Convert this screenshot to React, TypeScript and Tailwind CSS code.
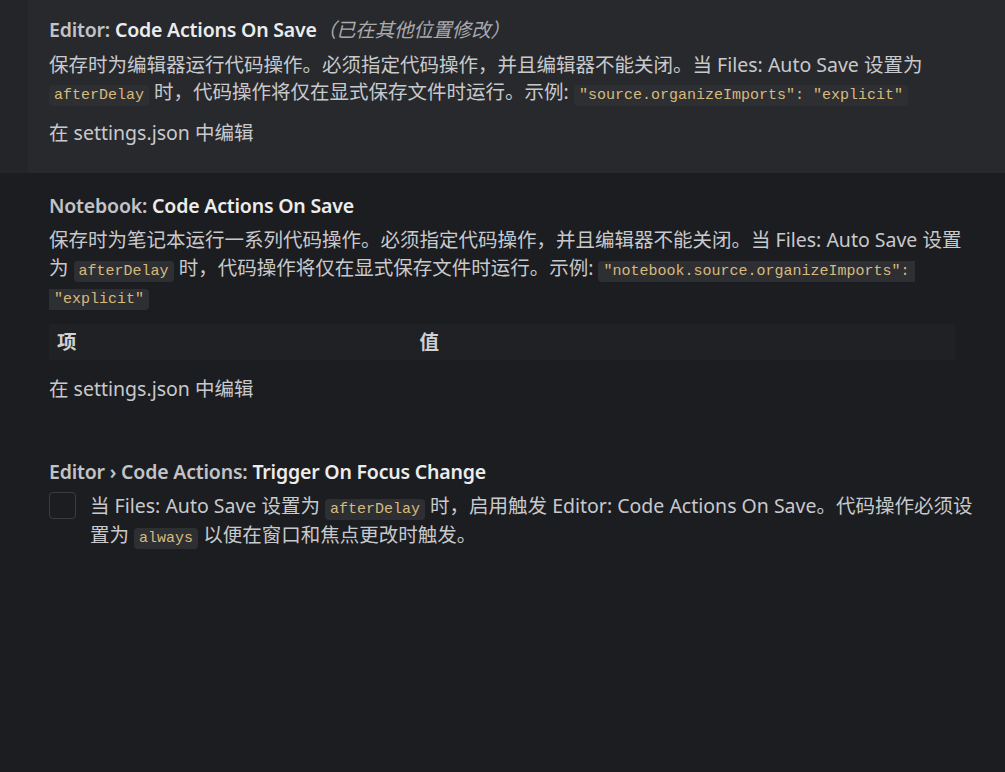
const Code = ({ children, className = '' }: { children: React.ReactNode; className?: string }) => (
  <code
    className={`rounded-[4px] bg-[#2e2f33] px-[5px] py-[2px] font-['Liberation_Mono',monospace] text-[15px] leading-none text-[#d7ba7d] ${className}`}
  >
    {children}
  </code>
)

function Title({ category, label, extra }: { category: string; label: string; extra?: string }) {
  return (
    <div className="leading-[27px] font-semibold tracking-[-0.01em]">
      <span className="text-[#c2c3c7]">{category}</span>
      <span className="text-[#ececed]">{label}</span>
      {extra && <span className="font-normal italic text-[#a9aaae]">{extra}</span>}
    </div>
  )
}

export default function App() {
  return (
    <div className="h-[772px] w-[1005px] overflow-hidden bg-[#1c1d20] font-['Noto_Sans','Noto_Sans_CJK_SC',sans-serif] text-[19.5px] text-[#c8c9cc]">
      {/* focused row */}
      <div className="flex h-[173px] bg-[#242528]">
        <div className="ml-[28px] flex-1 bg-[#28292c] pl-[21px] pt-[16px]">
          <Title category="Editor: " label="Code Actions On Save" extra="（已在其他位置修改）" />
          <p className="mt-[8px] whitespace-nowrap leading-[27px]">
            保存时为编辑器运行代码操作。必须指定代码操作，并且编辑器不能关闭。当 Files: Auto Save 设置为
            <br />
            <Code>afterDelay</Code> 时，代码操作将仅在显式保存文件时运行。示例: <Code>"source.organizeImports": "explicit"</Code>
          </p>
          <div className="mt-[14px] leading-[27px]">在 settings.json 中编辑</div>
        </div>
      </div>

      <div className="pl-[49px] pt-[19px]">
        <Title category="Notebook: " label="Code Actions On Save" />
        <p className="mt-[7px] whitespace-nowrap leading-[28px]">
          保存时为笔记本运行一系列代码操作。必须指定代码操作，并且编辑器不能关闭。当 Files: Auto Save 设置
          <br />
          为 <Code>afterDelay</Code> 时，代码操作将仅在显式保存文件时运行。示例: <Code className="rounded-r-none">"notebook.source.organizeImports":</Code>
          <br />
          <Code className="rounded-l-none">"explicit"</Code>
        </p>

        <div className="mt-[14px] flex h-[36px] w-[906px] items-center bg-[#202124] font-bold text-[#d0d1d4]">
          <div className="w-[40%] pl-[8px]">项</div>
          <div className="w-[60%] pl-[8px]">值</div>
        </div>

        <div className="mt-[15px] leading-[27px]">在 settings.json 中编辑</div>

        <div className="mt-[56px]">
          <Title category="Editor › Code Actions: " label="Trigger On Focus Change" />
          <div className="mt-[6px] flex gap-[14px]">
            <div className="mt-[1px] h-[27px] w-[27px] shrink-0 rounded-[4px] border border-[#3b3c40] bg-[#1c1d20]" />
            <p className="whitespace-nowrap leading-[29px]">
              当 Files: Auto Save 设置为 <Code>afterDelay</Code> 时，启用触发 Editor: Code Actions On Save。代码操作必须设
              <br />
              置为 <Code>always</Code> 以便在窗口和焦点更改时触发。
            </p>
          </div>
        </div>
      </div>
    </div>
  )
}
